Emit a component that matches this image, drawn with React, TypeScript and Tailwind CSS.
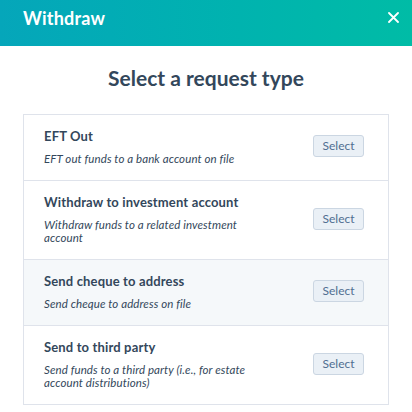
import React from "react";

const options = [
  { title: "EFT Out", desc: "EFT out funds to a bank account on file" },
  { title: "Withdraw to investment account", desc: "Withdraw funds to a related investment account" },
  { title: "Send cheque to address", desc: "Send cheque to address on file", active: true },
  { title: "Send to third party", desc: "Send funds to a third party (i.e., for estate account distributions)" },
];

export default function App() {
  return (
    <div className="w-[412px] h-[412px] bg-white text-[#33475b] overflow-hidden" style={{ fontFamily: "Lato, 'Noto Sans', sans-serif" }}>
      {/* Header */}
      <div className="h-[46px] flex items-center justify-between pl-[23px] pr-[13px] pb-[10px] bg-gradient-to-r from-[#05a6ba] to-[#00bca6]">
        <h1 className="text-[18px] font-bold text-white tracking-[0.2px]">Withdraw</h1>
        <svg width="11" height="11" viewBox="0 0 11 11" className="mt-[-2px]">
          <path d="M1 1 L10 10 M10 1 L1 10" stroke="white" strokeWidth="1.8" strokeLinecap="round" />
        </svg>
      </div>

      <h2 className="text-center text-[21px] font-bold mt-[18px] leading-[28px]">Select a request type</h2>

      {/* Options */}
      <div className="mx-[23px] mt-[22px] border border-[#dfe3eb] divide-y divide-[#dfe3eb]">
        {options.map((opt) => (
          <div
            key={opt.title}
            className={`flex items-center justify-between pl-5 pr-6 pt-3 pb-[15px] ${opt.active ? "bg-[#f5f8fa]" : "bg-white"}`}
          >
            <div className="w-[215px]">
              <div className="text-[13px] font-bold leading-[18px] tracking-[0.15px]">{opt.title}</div>
              <div className="text-[11.5px] italic leading-[13px] mt-[7px] tracking-[0.1px]">{opt.desc}</div>
            </div>
            <button className="w-[51px] h-[22px] rounded-[3px] border border-[#cbd6e2] bg-[#eaf0f6] text-[#506e91] text-[12px]">
              Select
            </button>
          </div>
        ))}
      </div>
    </div>
  );
}
